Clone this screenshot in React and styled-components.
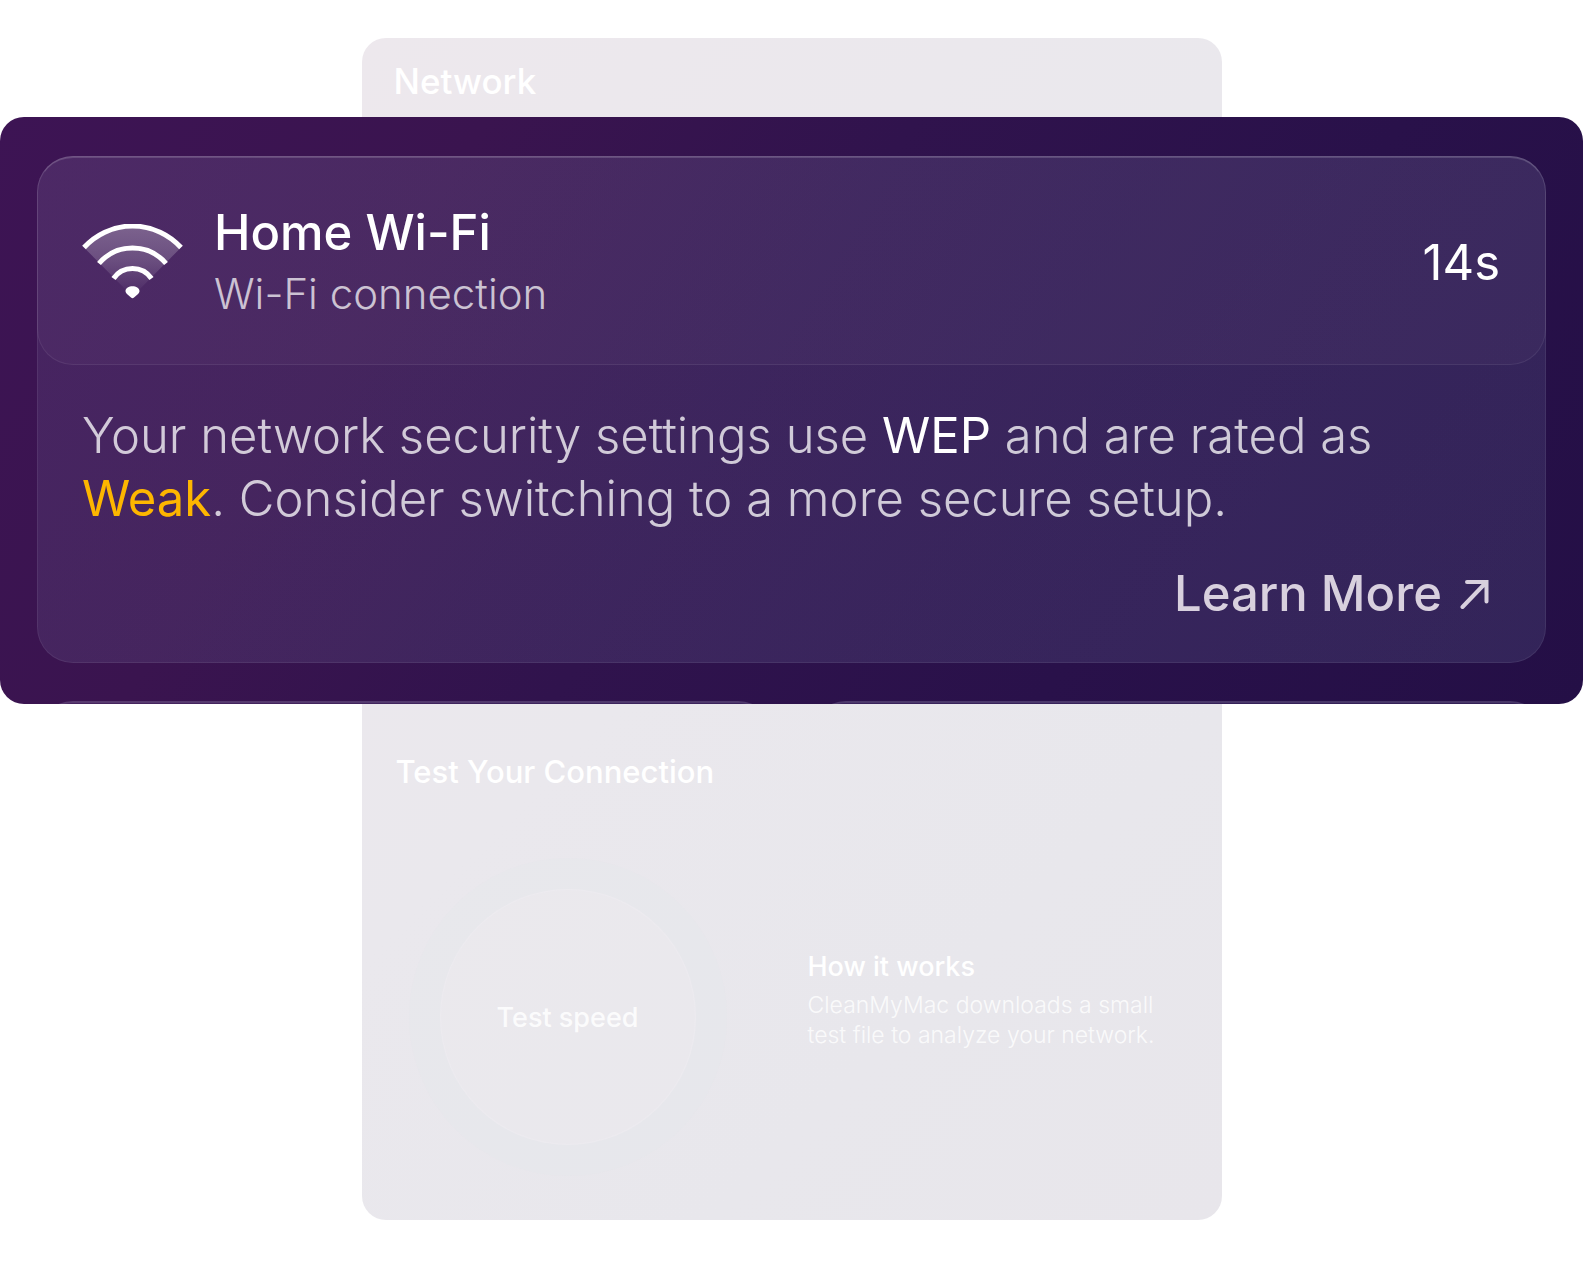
import React from "react";
import styled, { createGlobalStyle } from "styled-components";

const GlobalStyle = createGlobalStyle`
  *, *::before, *::after { box-sizing: border-box; }
  body {
    margin: 0;
    background: #ffffff;
    color: #ffffff;
    font-family: Inter, "Liberation Sans", Arial, sans-serif;
    font-synthesis: none;
  }
  h1, h2, h3, p { margin: 0; font-weight: inherit; }
`;

const Stage = styled.main`
  display: grid;
  grid-template-columns: minmax(0, 1fr);
  align-items: start;
  padding: 38px 0 54px;
`;

const Window = styled.section`
  grid-area: 1 / 1;
  justify-self: center;
  display: grid;
  grid-template-rows: 666px auto;
  width: 100%;
  max-width: 860px;
  padding-bottom: 44px;
  border-radius: 24px;
  background: linear-gradient(135deg, #ede8ed 0%, #eae8ed 45%, #e8e7ec 75%, #e8e6eb 100%);
`;

const WindowTitle = styled.h1`
  padding: 22px 32px;
  font-size: 35px;
  line-height: 42px;
  font-weight: 500;
`;

const SpeedTest = styled.div`
  display: flex;
  flex-direction: column;
  gap: 68px;
  padding-top: 50px;
`;

const SectionTitle = styled.h2`
  padding: 0 34px;
  font-size: 31px;
  line-height: 36px;
  font-weight: 500;
`;

const SpeedColumns = styled.div`
  display: grid;
  grid-template-columns: 412px 1fr;
  align-items: center;
`;

const Dial = styled.div`
  display: grid;
  place-items: center;
  justify-self: center;
  width: 318px;
  height: 318px;
  border-radius: 50%;
  background: rgba(228, 230, 234, 0.25);
`;

const DialButton = styled.button`
  width: 256px;
  height: 256px;
  padding: 0;
  border: 1px solid rgba(255, 255, 255, 0.1);
  border-radius: 50%;
  background: rgba(237, 233, 238, 0.6);
  color: rgba(255, 255, 255, 0.85);
  font: inherit;
  font-size: 27px;
  font-weight: 500;
`;

const Explain = styled.div`
  display: grid;
  gap: 4px;
  padding: 0 34px;
  margin-bottom: 36px;
`;

const ExplainTitle = styled.h3`
  font-size: 27px;
  line-height: 38px;
  font-weight: 500;
`;

const ExplainText = styled.p`
  font-size: 23px;
  line-height: 30px;
  font-weight: 300;
  color: rgba(255, 255, 255, 0.8);
`;

const Callout = styled.section`
  grid-area: 1 / 1;
  z-index: 1;
  margin-top: 79px;
  padding: 39px 37px 0;
  overflow: hidden;
  border-radius: 24px;
  background: linear-gradient(122deg, #3d1454 0%, #3a144f 25%, #30134d 47%, #29114a 72%, #240f46 100%);
`;

const Card = styled.article`
  border-radius: 36px;
  background: linear-gradient(135deg, rgba(150, 150, 200, 0.12), rgba(140, 165, 205, 0.14));
  box-shadow: inset 0 0 0 1px rgba(255, 255, 255, 0.07);
`;

const CardHeader = styled.header`
  display: flex;
  align-items: center;
  gap: 30px;
  height: 209px;
  padding: 4px 45px 0 44px;
  border: 1px solid rgba(255, 255, 255, 0.07);
  border-top: 2px solid rgba(255, 255, 255, 0.15);
  border-radius: 36px;
  background: rgba(240, 200, 220, 0.035);
`;

const Names = styled.div`
  flex: 1;
`;

const NetworkName = styled.h2`
  font-size: 49px;
  line-height: 62px;
  font-weight: 500;
`;

const NetworkKind = styled.p`
  font-size: 42px;
  line-height: 60px;
  font-weight: 300;
  color: rgba(255, 255, 255, 0.72);
`;

const Elapsed = styled.p`
  font-size: 49px;
  line-height: 60px;
`;

const CardBody = styled.div`
  display: flex;
  flex-direction: column;
  gap: 34px;
  padding: 39px 45px 39px;
`;

const Advice = styled.p`
  font-size: 49px;
  line-height: 63px;
  font-weight: 300;
  color: rgba(255, 255, 255, 0.76);
`;

const Mark = styled.strong`
  font-weight: 400;
  color: ${(p) => (p.$warn ? "#fdb600" : "#ffffff")};
`;

const LearnMore = styled.a`
  display: flex;
  align-items: center;
  align-self: flex-end;
  gap: 18px;
  padding-right: 12px;
  color: #d8d0de;
  font-size: 49px;
  line-height: 60px;
  font-weight: 500;
  text-decoration: none;
`;

const Icon = styled.svg`
  display: block;
  flex: none;
`;

const NextRow = styled.div`
  display: grid;
  grid-template-columns: 1fr 1fr;
  gap: 36px;
  height: 3px;
  margin-top: 38px;
`;

const NextCard = styled.div`
  height: 120px;
  border-top: 2px solid rgba(255, 255, 255, 0.1);
  border-radius: 36px;
  background: rgba(150, 150, 200, 0.13);
`;

function WifiIcon() {
  return (
    <Icon width="102" height="78" viewBox="0 0 102 78" fill="none" aria-hidden="true">
      <defs>
        <linearGradient id="fan" x1="0" y1="0" x2="0" y2="1">
          <stop offset="0" stopColor="#fff" stopOpacity="0.27" />
          <stop offset="0.5" stopColor="#fff" stopOpacity="0.17" />
          <stop offset="1" stopColor="#fff" stopOpacity="0" />
        </linearGradient>
      </defs>
      <path d="M2 23.500A65.500 65.500 0 0 1 99 23.500L50.500 72.500Z" fill="url(#fan)" />
      <g stroke="#fff" strokeWidth="5">
        <path d="M2 23.500A65.500 65.500 0 0 1 99 23.500" />
        <path d="M17 39.500A44 44 0 0 1 84 39.500" />
        <path d="M31.500 54.500A23 23 0 0 1 69.500 54.500" />
      </g>
      <path d="M43.500 67C43.500 60.500 57.500 60.500 57.500 67C57.500 68.500 56.500 69.500 55.500 70.500L52 73.500Q50.500 74.800 49 73.500L45.500 70.500C44.500 69.500 43.500 68.500 43.500 67Z" fill="#fff" />
    </Icon>
  );
}

function ArrowIcon() {
  return (
    <Icon width="29" height="31" viewBox="0 0 29 31" fill="none" aria-hidden="true">
      <path d="M2.500 28L26 3.500M7 3H26.500V22.500" stroke="currentColor" strokeWidth="4" strokeLinecap="round" strokeLinejoin="miter" />
    </Icon>
  );
}

export default function App() {
  return (
    <>
      <GlobalStyle />
      <Stage>
        <Window>
          <WindowTitle>Network</WindowTitle>
          <SpeedTest>
            <SectionTitle>Test Your Connection</SectionTitle>
            <SpeedColumns>
              <Dial>
                <DialButton type="button">Test speed</DialButton>
              </Dial>
              <Explain>
                <ExplainTitle>How it works</ExplainTitle>
                <ExplainText>
                  CleanMyMac downloads a small
                  <br />
                  test file to analyze your network.
                </ExplainText>
              </Explain>
            </SpeedColumns>
          </SpeedTest>
        </Window>
        <Callout>
          <Card>
            <CardHeader>
              <WifiIcon />
              <Names>
                <NetworkName>Home Wi-Fi</NetworkName>
                <NetworkKind>Wi-Fi connection</NetworkKind>
              </Names>
              <Elapsed>14s</Elapsed>
            </CardHeader>
            <CardBody>
              <Advice>
                Your network security settings use <Mark>WEP</Mark> and are rated as
                <br />
                <Mark $warn>Weak</Mark>. Consider switching to a more secure setup.
              </Advice>
              <LearnMore href="#learn-more">
                Learn More
                <ArrowIcon />
              </LearnMore>
            </CardBody>
          </Card>
          <NextRow>
            <NextCard />
            <NextCard />
          </NextRow>
        </Callout>
      </Stage>
    </>
  );
}
